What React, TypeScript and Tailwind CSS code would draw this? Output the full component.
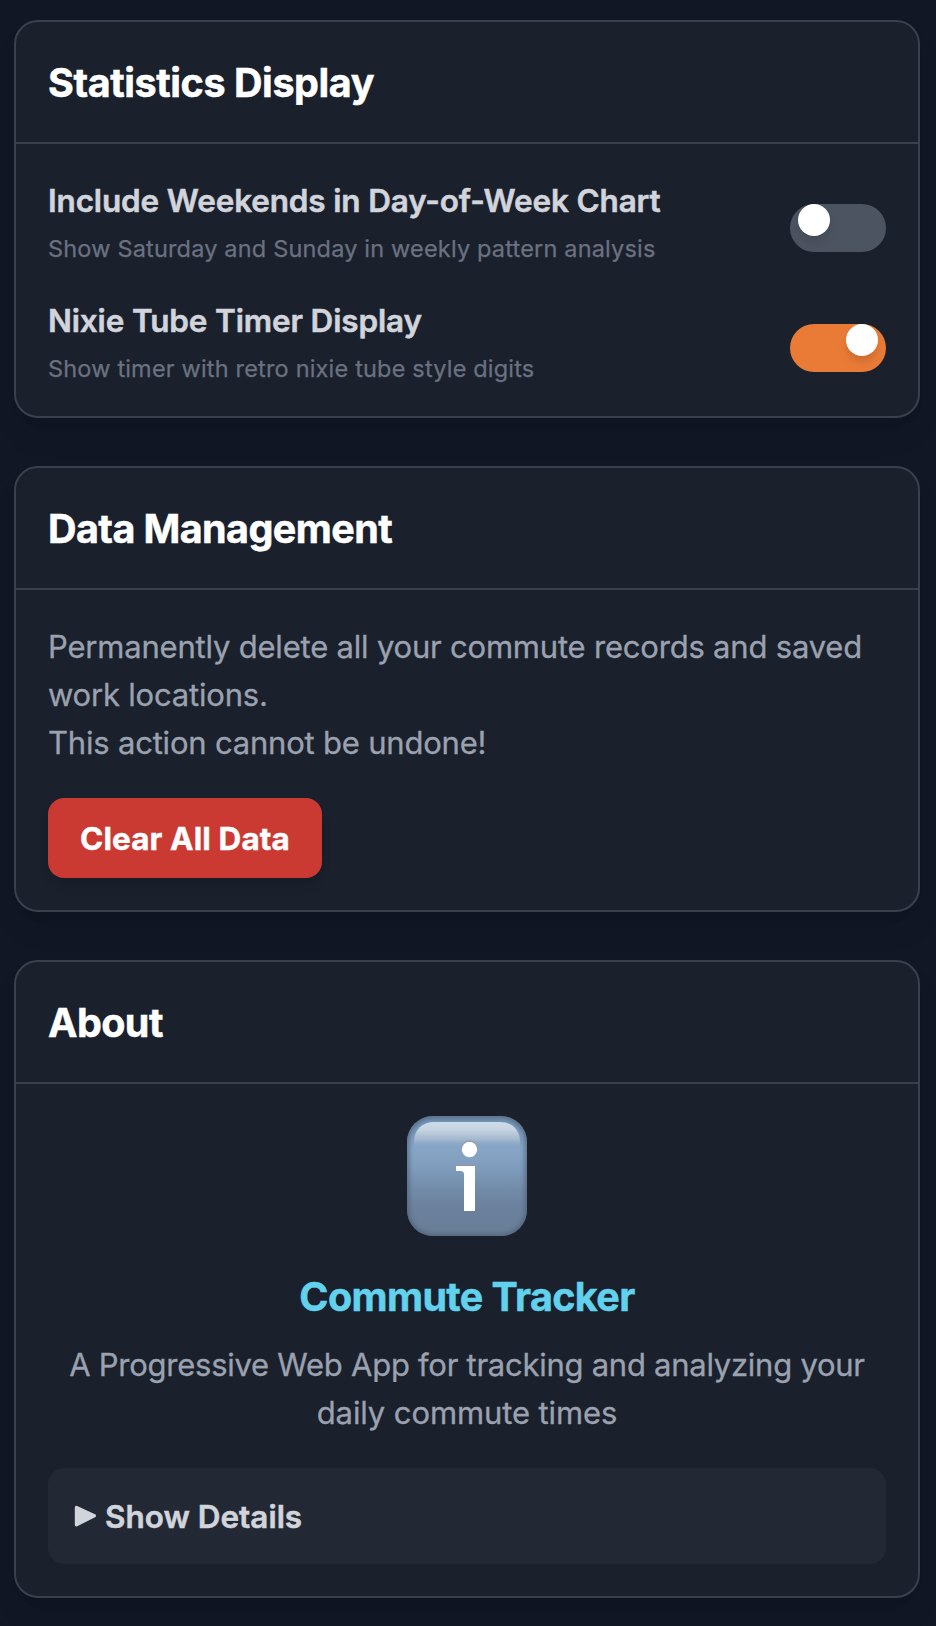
import React from "react";

type CardProps = { title: string; children: React.ReactNode };

function Card({ title, children }: CardProps) {
  return (
    <section className="rounded-[24px] border-2 border-[#3a404d] bg-[#1a212d] shadow-[0_20px_30px_-6px_rgba(0,0,0,0.1),0_8px_12px_-8px_rgba(0,0,0,0.1)]">
      <header className="border-b-2 border-[#3a404d] px-8 pt-[33px] pb-[31px]">
        <h2
          className={`text-[39.5px] leading-[56px] font-bold text-white [-webkit-text-stroke:0.5px_currentColor] ${
            title === "Statistics Display" ? "tracking-[-0.42px]" : "tracking-[-0.58px]"
          }`}
        >
          {title}
        </h2>
      </header>
      <div className="p-8">{children}</div>
    </section>
  );
}

type SettingProps = { label: string; hint: string; on: boolean };

function Setting({ label, hint, on }: SettingProps) {
  return (
    <div className="flex items-center justify-between">
      <div>
        <div className="-mb-px pt-px text-[31.5px] leading-[48px] font-semibold tracking-[-0.16px] text-[#d2d4dc] [-webkit-text-stroke:0.5px_currentColor]">
          {label}
        </div>
        <div className="mt-2 -mb-px pt-px text-[23.5px] leading-8 tracking-[0.18px] text-[#6b7180] [-webkit-text-stroke:0.25px_currentColor]">
          {hint}
        </div>
      </div>
      <button
        type="button"
        role="switch"
        aria-checked={on}
        aria-label={label}
        className={`mt-4 flex h-12 w-24 items-start rounded-full px-2 ${
          on ? "justify-end bg-[#e97b36]" : "justify-start bg-[#4d5461]"
        }`}
      >
        <span className="size-8 rounded-full bg-white shadow-[0_8px_12px_-2px_rgba(0,0,0,0.1),0_4px_8px_-4px_rgba(0,0,0,0.1)]" />
      </button>
    </div>
  );
}

function InfoBadge() {
  return (
    <svg className="size-[120px]" viewBox="0 0 120 120" aria-hidden="true">
      <defs>
        <linearGradient id="badge-body" x1="0" y1="0" x2="0" y2="1">
          <stop offset="0" stopColor="#7291b2" />
          <stop offset="0.28" stopColor="#86a4c5" />
          <stop offset="0.42" stopColor="#809dbd" />
          <stop offset="0.62" stopColor="#718ba7" />
          <stop offset="0.78" stopColor="#6b809c" />
          <stop offset="1" stopColor="#697f97" />
        </linearGradient>
        <linearGradient id="badge-gloss" x1="0" y1="0" x2="0" y2="1">
          <stop offset="0" stopColor="#cfdce9" />
          <stop offset="0.3" stopColor="#c5d3e1" />
          <stop offset="0.65" stopColor="#a9bdd1" stopOpacity="0.85" />
          <stop offset="1" stopColor="#86a4c5" stopOpacity="0" />
        </linearGradient>
        <clipPath id="badge-clip">
          <rect width="120" height="120" rx="26" />
        </clipPath>
        <filter id="badge-edge" x="-10%" y="-10%" width="120%" height="120%">
          <feGaussianBlur stdDeviation="2" />
        </filter>
      </defs>
      <g clipPath="url(#badge-clip)">
        <rect width="120" height="120" fill="url(#badge-body)" />
        <rect
          width="120"
          height="120"
          rx="26"
          fill="none"
          stroke="#4c5f74"
          strokeWidth="4"
          opacity="0.85"
          filter="url(#badge-edge)"
        />
        <path d="M7 33V26C7 14 15 6 27 6H93C105 6 113 14 113 26V33Z" fill="url(#badge-gloss)" />
      </g>
      <g fill="#91969f" transform="translate(0 -0.9)">
        <circle cx="62.5" cy="33.5" r="8" />
        <path d="M49 50H68V95H57V58.5Q57 55 53.5 55H49Z" />
      </g>
      <g fill="#fff">
        <circle cx="62.5" cy="33.5" r="7.7" />
        <path d="M49 50H68V95H57V58.5Q57 55 53.5 55H49Z" />
      </g>
    </svg>
  );
}

export default function App() {
  return (
    <main className="flex min-h-[1626px] w-[936px] flex-col gap-12 bg-[#111725] pt-5 pr-4 pb-7 pl-[14px] font-['Inter',sans-serif]">
      <Card title="Statistics Display">
        <div className="flex flex-col gap-8">
          <Setting
            label="Include Weekends in Day-of-Week Chart"
            hint="Show Saturday and Sunday in weekly pattern analysis"
            on={false}
          />
          <Setting
            label="Nixie Tube Timer Display"
            hint="Show timer with retro nixie tube style digits"
            on
          />
        </div>
      </Card>

      <Card title="Data Management">
        <p className="-mb-px pt-px text-[31px] leading-[48px] tracking-[-0.2px] text-[#9ba1af] [-webkit-text-stroke:0.3px_currentColor]">
          Permanently delete all your commute records and saved work locations.
          <br />
          This action cannot be undone!
        </p>
        <button
          type="button"
          className="mt-8 block h-20 w-[274px] rounded-[16px] bg-[#ca3a32] pt-0.5 text-center text-[31.5px] leading-[48px] font-bold tracking-[0.1px] text-white shadow-[0_8px_12px_-2px_rgba(0,0,0,0.1),0_4px_8px_-4px_rgba(0,0,0,0.1)] [-webkit-text-stroke:0.4px_currentColor]"
        >
          Clear All Data
        </button>
      </Card>

      <Card title="About">
        <div className="flex flex-col items-center text-center">
          <InfoBadge />
          <h3 className="mt-8 -mb-px pt-px text-[39.5px] leading-[56px] font-bold tracking-[-0.62px] text-[#62d1ec] [-webkit-text-stroke:0.5px_currentColor]">
            Commute Tracker
          </h3>
          <p className="mt-4 -mb-px pt-px text-[31px] leading-[48px] tracking-[-0.26px] text-[#9ba1af] [-webkit-text-stroke:0.3px_currentColor]">
            A Progressive Web App for tracking and analyzing your
            <br />
            <span className="tracking-[-0.1px]">daily commute times</span>
          </p>
        </div>
        <div className="mt-8 flex h-24 items-center rounded-[16px] bg-[#222935] px-6 text-[31.5px] leading-[48px] font-semibold tracking-[-0.02px] text-[#d2d4dc] [-webkit-text-stroke:0.5px_currentColor]">
          <svg className="mr-[7px] ml-[2px] h-6 w-6" viewBox="0 0 24 24" aria-hidden="true">
            <path
              d="M2.5 3.5L20.3 11.7L2.5 20.7Z"
              fill="currentColor"
              stroke="currentColor"
              strokeWidth="3.4"
              strokeLinejoin="round"
            />
          </svg>
          <span className="pt-0.5">Show Details</span>
        </div>
      </Card>
    </main>
  );
}
